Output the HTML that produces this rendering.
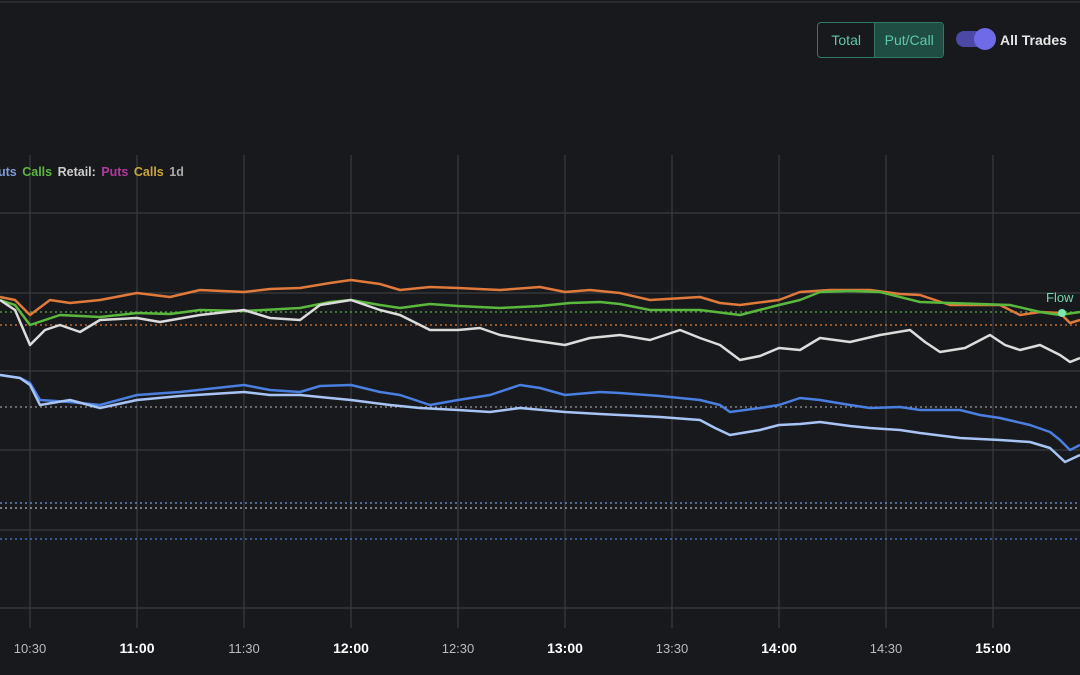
<!DOCTYPE html>
<html><head><meta charset="utf-8"><style>
body{margin:0;width:1080px;height:675px;background:#18191d;overflow:hidden;font-family:"Liberation Sans",sans-serif;position:relative}
.seg{position:absolute;left:817px;top:22px;width:127px;height:36px;border:1px solid #2f7a66;border-radius:4px;display:flex;box-sizing:border-box;overflow:hidden}
.seg div{flex:1;display:flex;align-items:center;justify-content:center;color:#5fc9a6;font-size:14px}
.seg div+div{background:#1f4d44;border-left:1px solid #2f7a66;flex:1.2}
.tog{position:absolute;left:956px;top:31px;width:34px;height:16px;border-radius:8px;background:#4b48a6}
.knob{position:absolute;left:974px;top:28px;width:22px;height:22px;border-radius:50%;background:#6f6be8}
.lbl{position:absolute;left:1000px;top:32px;color:#e6e6e6;font-size:14px;font-weight:bold}
.leg{position:absolute;top:165px;left:-2px;font-size:12.5px;font-weight:bold;white-space:pre;word-spacing:2px}
</style></head><body>
<svg width="1080" height="675" style="position:absolute;left:0;top:0">
<line x1="0" y1="2" x2="1080" y2="2" stroke="#2a2b30" stroke-width="2"/>
<g stroke="#3a3b40" stroke-width="1.2">
<line x1="0" y1="213" x2="1080" y2="213"/><line x1="0" y1="293" x2="1080" y2="293"/><line x1="0" y1="371" x2="1080" y2="371"/><line x1="0" y1="450" x2="1080" y2="450"/><line x1="0" y1="530" x2="1080" y2="530"/><line x1="0" y1="608" x2="1080" y2="608"/>
<line x1="30" y1="155" x2="30" y2="628"/><line x1="137" y1="155" x2="137" y2="628"/><line x1="244" y1="155" x2="244" y2="628"/><line x1="351" y1="155" x2="351" y2="628"/><line x1="458" y1="155" x2="458" y2="628"/><line x1="565" y1="155" x2="565" y2="628"/><line x1="672" y1="155" x2="672" y2="628"/><line x1="779" y1="155" x2="779" y2="628"/><line x1="886" y1="155" x2="886" y2="628"/><line x1="993" y1="155" x2="993" y2="628"/>
</g>
<g stroke-dasharray="2 3" stroke-width="1.2">
<line x1="0" y1="312" x2="1080" y2="312" stroke="#5aa845"/>
<line x1="0" y1="325" x2="1080" y2="325" stroke="#d8773a"/>
<line x1="0" y1="407" x2="1080" y2="407" stroke="#999"/>
<line x1="0" y1="503" x2="1080" y2="503" stroke="#7a9cd8"/>
<line x1="0" y1="508" x2="1080" y2="508" stroke="#bbb"/>
<line x1="0" y1="539" x2="1080" y2="539" stroke="#4a7fd8"/>
</g>
<g fill="none" stroke-width="2.5" stroke-linejoin="round">
<polyline stroke="#e07a3a" points="0,297 15,300 30,315 50,300 70,303 100,300 137,293 170,297 200,290 244,292 270,289 300,288 330,283 351,280 380,284 400,290 430,287 458,288 500,290 540,287 565,292 590,290 620,293 650,300 700,297 720,303 740,305 779,300 800,292 830,290 870,290 900,294 920,295 950,305 1000,305 1020,315 1040,312 1060,313 1070,323 1080,320"/>
<polyline stroke="#5ab83c" points="0,300 15,305 30,325 60,315 100,317 137,313 170,314 200,310 244,311 300,308 330,302 351,300 380,305 400,308 430,304 458,306 500,308 540,306 570,303 600,302 620,304 650,310 700,310 740,315 779,305 800,300 820,292 850,291 880,292 920,302 950,303 980,304 1010,305 1040,312 1060,315 1080,312"/>
<polyline stroke="#dcdcdc" points="0,300 15,310 30,345 45,330 60,325 80,332 100,320 137,318 160,322 200,315 244,310 270,318 300,320 320,305 351,300 380,310 400,315 430,330 458,330 480,328 500,335 530,340 565,345 590,338 620,335 650,340 680,330 700,338 720,345 740,360 760,356 779,348 800,350 820,338 850,342 880,335 910,330 925,342 940,352 965,348 990,335 1005,345 1020,350 1040,345 1060,355 1070,362 1080,358"/>
<polyline stroke="#4a7fe0" points="0,375 20,378 30,383 40,400 70,402 100,405 137,395 180,392 244,385 270,390 300,392 320,386 351,385 380,392 400,395 430,405 458,400 490,395 520,385 540,388 565,395 600,392 620,393 660,396 700,400 720,405 730,412 760,408 779,405 800,398 820,400 850,405 870,408 900,407 920,410 960,410 980,415 1000,418 1030,425 1050,432 1060,440 1070,450 1080,445"/>
<polyline stroke="#a8c4f5" points="0,375 20,378 30,385 40,405 70,400 100,408 137,400 180,396 244,392 270,395 300,395 330,398 351,400 390,405 420,408 458,410 490,412 520,408 565,412 600,414 620,415 660,417 700,420 715,428 730,435 760,430 779,425 800,424 820,422 850,426 870,428 900,430 920,433 960,438 1000,440 1030,442 1050,448 1065,462 1080,455"/>
</g>
<circle cx="1062" cy="313" r="4" fill="#7de8b0"/>
<text x="1046" y="302" fill="#6fd8a8" font-size="13" font-family="Liberation Sans">Flow</text>
<g font-family="Liberation Sans" font-size="13" text-anchor="middle">
<text x="30" y="653" fill="#bbb">10:30</text>
<text x="137" y="653" fill="#fff" font-weight="bold" font-size="14">11:00</text>
<text x="244" y="653" fill="#bbb">11:30</text>
<text x="351" y="653" fill="#fff" font-weight="bold" font-size="14">12:00</text>
<text x="458" y="653" fill="#bbb">12:30</text>
<text x="565" y="653" fill="#fff" font-weight="bold" font-size="14">13:00</text>
<text x="672" y="653" fill="#bbb">13:30</text>
<text x="779" y="653" fill="#fff" font-weight="bold" font-size="14">14:00</text>
<text x="886" y="653" fill="#bbb">14:30</text>
<text x="993" y="653" fill="#fff" font-weight="bold" font-size="14">15:00</text>
</g>
</svg>
<div class="leg"><span style="color:#7f9bd6">uts</span> <span style="color:#5ab83c">Calls</span> <span style="color:#ccc">Retail:</span> <span style="color:#b23aa0">Puts</span> <span style="color:#c9a53a">Calls</span> <span style="color:#aaa">1d</span></div>
<div class="seg"><div>Total</div><div>Put/Call</div></div>
<div class="tog"></div><div class="knob"></div>
<div class="lbl">All Trades</div>
</body></html>
